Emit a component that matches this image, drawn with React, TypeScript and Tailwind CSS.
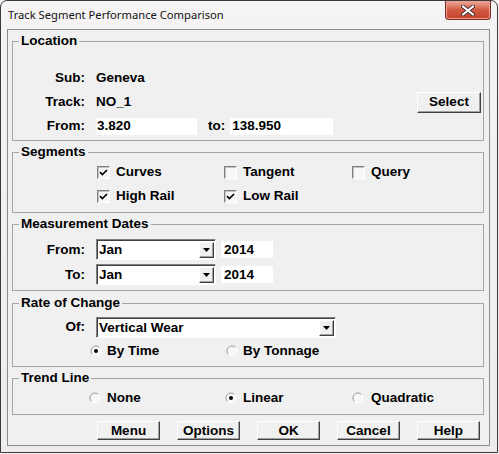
import React from "react";

const Check = ({ on }: { on?: boolean }) => (
    <span className="flex h-[13px] w-[13px] shrink-0 items-center justify-center border border-[#808080] border-b-white border-r-white bg-[#f7f7f7] shadow-[inset_1px_1px_0_#c4c4c4]">
        {on && (
            <svg width="9" height="9" viewBox="0 0 9 9">
                <path d="M1 4.2 L3.4 6.6 L8 2" stroke="#000" strokeWidth="1.7" fill="none" />
            </svg>
        )}
    </span>
);

const Radio = ({ on }: { on?: boolean }) => (
    <svg width="12" height="12" viewBox="0 0 12 12" className="shrink-0">
        <circle cx="6" cy="6" r="5" fill="#f8f8f8" />
        <path d="M2.46 9.54 A5 5 0 0 1 9.54 2.46" stroke="#9a9a9a" fill="none" />
        <path d="M9.54 2.46 A5 5 0 0 1 2.46 9.54" stroke="#ffffff" fill="none" />
        {on && <circle cx="6" cy="6" r="2" fill="#000" />}
    </svg>
);

const Combo = ({ value, w }: { value: string; w: string }) => (
    <div className={`flex h-[21px] items-stretch border border-[#808080] border-b-white border-r-white bg-white shadow-[inset_1px_1px_0_#404040] ${w}`}>
        <span className="flex flex-1 items-center pl-[2px] pt-[1px]">{value}</span>
        <span className="m-[1px] mt-[2px] flex w-[15px] items-center justify-center border border-t-white border-l-white border-r-[#404040] border-b-[#404040] bg-[#f0f0f0] shadow-[inset_-1px_-1px_0_#a0a0a0]">
            <svg width="7" height="4" viewBox="0 0 7 4">
                <path d="M0 0 H7 L3.5 4 Z" fill="#000" />
            </svg>
        </span>
    </div>
);

const Btn = ({ children, w = "w-[63px]", h = "h-[19px]" }: { children: React.ReactNode; w?: string; h?: string }) => (
    <button className={`flex items-center justify-center border border-t-white border-l-white border-r-[#404040] border-b-[#404040] bg-[#f0f0f0] shadow-[inset_-1px_-1px_0_#a0a0a0] ${w} ${h}`}>
        {children}
    </button>
);

const Group = ({ title, children, cls }: { title: string; children: React.ReactNode; cls: string }) => (
    <fieldset className={`border border-[#a5a5a5] ${cls}`}>
        <legend className="ml-[6px] px-[2px] leading-[16px]">{title}</legend>
        {children}
    </fieldset>
);

const Label = ({ children }: { children: React.ReactNode }) => (
    <span className="w-[72px] shrink-0 text-right">{children}</span>
);

export default function App() {
    return (
        <div className="h-[454px] w-[499px] bg-[#f4f0f0] font-['Liberation_Sans',Arial,sans-serif] text-[13.5px] font-bold leading-[16px] text-black">
            <div className="flex h-[453px] w-[498px] flex-col rounded-t-[7px] border border-[#3a3a3a] bg-gradient-to-b from-[#f6f3f4] to-[#eeecef]">
                <div className="flex h-[28px] shrink-0 items-start justify-between">
                    <span className="ml-[7px] mt-[6px] font-['Noto_Sans',sans-serif] text-[11.2px] font-normal text-[#111]">
                        Track Segment Performance Comparison
                    </span>
                    <div className="mr-[6px] flex h-[19px] w-[46px] items-center justify-center rounded-b-[4px] border border-t-0 border-[#7a2a1c] bg-gradient-to-b from-[#e9a99b] via-[#d25a43] to-[#c4432c] shadow-[inset_0_0_0_1px_#ec9f8e]">
                        <svg width="14" height="11" viewBox="0 0 14 11">
                            <path d="M2 1.5 L12 9.5 M12 1.5 L2 9.5" stroke="#4a3030" strokeWidth="4" strokeLinecap="round" />
                            <path d="M2 1.5 L12 9.5 M12 1.5 L2 9.5" stroke="#ffffff" strokeWidth="2.2" strokeLinecap="round" />
                        </svg>
                    </div>
                </div>

                <div className="flex-1 pb-[6px] pl-[6px] pr-[7px]">
                    <div className="flex h-full flex-col border border-[#8c8c8c] bg-[#f0f0f0] pl-[4px] pr-[5px] pt-[3px]">
                        <Group title="Location" cls="pb-[2px]">
                            <div className="pt-[17px]">
                                <div className="flex h-[24px] items-center">
                                    <Label>Sub:</Label>
                                    <span className="ml-[11px]">Geneva</span>
                                </div>
                                <div className="flex h-[24px] items-center">
                                    <Label>Track:</Label>
                                    <span className="ml-[11px]">NO_1</span>
                                    <span className="ml-auto mr-[2px]">
                                        <Btn w="w-[64px]" h="h-[21px]">Select</Btn>
                                    </span>
                                </div>
                                <div className="flex h-[24px] items-center">
                                    <Label>From:</Label>
                                    <span className="ml-[11px] flex h-[17px] w-[101px] items-center bg-white pl-[1px]">3.820</span>
                                    <span className="ml-[11px]">to:</span>
                                    <span className="ml-[5px] flex h-[17px] w-[103px] items-center bg-white pl-[2px]">138.950</span>
                                </div>
                            </div>
                        </Group>

                        <Group title="Segments" cls="mt-[3px] pb-[4px]">
                            <div className="grid grid-cols-[127px_128px_1fr] pl-[84px]">
                                <div className="flex h-[24px] items-center gap-[6px]"><Check on />Curves</div>
                                <div className="flex h-[24px] items-center gap-[6px]"><Check />Tangent</div>
                                <div className="flex h-[24px] items-center gap-[6px]"><Check />Query</div>
                                <div className="flex h-[24px] items-center gap-[6px]"><Check on />High Rail</div>
                                <div className="flex h-[24px] items-center gap-[6px]"><Check on />Low Rail</div>
                            </div>
                        </Group>

                        <Group title="Measurement Dates" cls="mt-[3px] pb-[3px]">
                            <div className="pt-[5px]">
                                <div className="flex h-[25px] items-center">
                                    <Label>From:</Label>
                                    <span className="ml-[11px]"><Combo value="Jan" w="w-[120px]" /></span>
                                    <span className="ml-[5px] flex h-[17px] w-[52px] items-center bg-white pl-[3px]">2014</span>
                                </div>
                                <div className="flex h-[25px] items-center">
                                    <Label>To:</Label>
                                    <span className="ml-[11px]"><Combo value="Jan" w="w-[120px]" /></span>
                                    <span className="ml-[5px] flex h-[17px] w-[52px] items-center bg-white pl-[3px]">2014</span>
                                </div>
                            </div>
                        </Group>

                        <Group title="Rate of Change" cls="mt-[4px] pb-[3px]">
                            <div className="pt-[4px]">
                                <div className="flex h-[24px] items-center">
                                    <Label>Of:</Label>
                                    <span className="ml-[11px]"><Combo value="Vertical Wear" w="w-[240px]" /></span>
                                </div>
                                <div className="flex h-[24px] items-center pl-[77px]">
                                    <div className="flex w-[136px] items-center gap-[5px]"><Radio on />By Time</div>
                                    <div className="flex items-center gap-[5px]"><Radio />By Tonnage</div>
                                </div>
                            </div>
                        </Group>

                        <Group title="Trend Line" cls="mt-[3px] pb-[4px]">
                            <div className="flex h-[24px] items-center pl-[76px]">
                                <div className="flex w-[136px] items-center gap-[6px]"><Radio />None</div>
                                <div className="flex w-[127px] items-center gap-[6px]"><Radio on />Linear</div>
                                <div className="flex items-center gap-[7px]"><Radio />Quadratic</div>
                            </div>
                        </Group>

                        <div className="mt-[6px] flex gap-[17px] pl-[85px]">
                            <Btn>Menu</Btn>
                            <Btn>Options</Btn>
                            <Btn>OK</Btn>
                            <Btn>Cancel</Btn>
                            <Btn>Help</Btn>
                        </div>
                    </div>
                </div>
            </div>
        </div>
    );
}
